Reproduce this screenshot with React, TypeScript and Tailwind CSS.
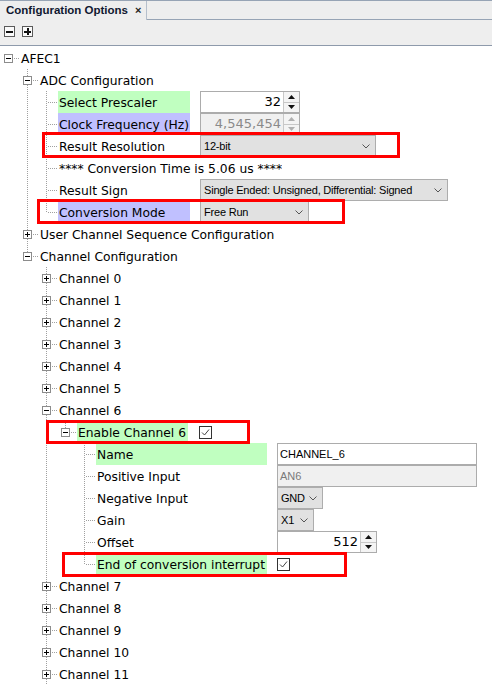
import clsx from "clsx";

type Ctrl =
  | { kind: "spin"; value: string; w: string; disabled?: boolean }
  | { kind: "combo"; value: string; w: string }
  | { kind: "text"; value: string; w: string; disabled?: boolean }
  | { kind: "check" };

interface TreeNode {
  label: string;
  open?: boolean; // undefined = leaf
  hl?: "green" | "blue";
  labelW?: string;
  gap?: string;
  ctrl?: Ctrl;
  children?: TreeNode[];
}

const adcLeaf = (label: string, ctrl?: Ctrl, hl?: "green" | "blue"): TreeNode => ({
  label,
  hl,
  ctrl,
  labelW: "w-[132px]",
  gap: "ml-[10px]",
});

const chLeaf = (label: string, ctrl?: Ctrl, hl?: "green" | "blue"): TreeNode => ({
  label,
  hl,
  ctrl,
  labelW: "w-[171px]",
  gap: "ml-[10px]",
});

const closedChannel = (n: number): TreeNode => ({ label: `Channel ${n}`, open: false });

const tree: TreeNode = {
  label: "AFEC1",
  open: true,
  children: [
    {
      label: "ADC Configuration",
      open: true,
      children: [
        adcLeaf("Select Prescaler", { kind: "spin", value: "32", w: "w-[100px]" }, "green"),
        adcLeaf("Clock Frequency (Hz)", { kind: "spin", value: "4,545,454", w: "w-[100px]", disabled: true }, "blue"),
        adcLeaf("Result Resolution", { kind: "combo", value: "12-bit", w: "w-[176px]" }),
        { label: "**** Conversion Time is 5.06 us ****" },
        adcLeaf("Result Sign", { kind: "combo", value: "Single Ended: Unsigned, Differential: Signed", w: "w-[248px]" }),
        adcLeaf("Conversion Mode", { kind: "combo", value: "Free Run", w: "w-[109px]" }, "blue"),
      ],
    },
    { label: "User Channel Sequence Configuration", open: false },
    {
      label: "Channel Configuration",
      open: true,
      children: [
        closedChannel(0),
        closedChannel(1),
        closedChannel(2),
        closedChannel(3),
        closedChannel(4),
        closedChannel(5),
        {
          label: "Channel 6",
          open: true,
          children: [
            {
              label: "Enable Channel 6",
              open: true,
              hl: "green",
              labelW: "w-[111px]",
              gap: "ml-[11px]",
              ctrl: { kind: "check" },
              children: [
                chLeaf("Name", { kind: "text", value: "CHANNEL_6", w: "w-[200px]" }, "green"),
                chLeaf("Positive Input", { kind: "text", value: "AN6", w: "w-[200px]", disabled: true }),
                chLeaf("Negative Input", { kind: "combo", value: "GND", w: "w-[46px]" }),
                chLeaf("Gain", { kind: "combo", value: "X1", w: "w-[37px]" }),
                chLeaf("Offset", { kind: "spin", value: "512", w: "w-[100px]" }),
                chLeaf("End of conversion interrupt", { kind: "check" }, "green"),
              ],
            },
          ],
        },
        closedChannel(7),
        closedChannel(8),
        closedChannel(9),
        closedChannel(10),
        closedChannel(11),
      ],
    },
  ],
};

interface Row {
  node: TreeNode;
  level: number;
  guides: boolean[];
  last: boolean;
  root: boolean;
}

function flatten(node: TreeNode, level: number, guides: boolean[], last: boolean, root: boolean, out: Row[]) {
  out.push({ node, level, guides, last, root });
  if (node.open && node.children) {
    node.children.forEach((c, i) => {
      // Channel 11 is not really the last one, the list goes on below the fold
      const isLast = i === node.children!.length - 1 && c.label !== "Channel 11";
      flatten(c, level + 1, [...guides, !last && !root], isLast, false, out);
    });
  }
}

const DOT = "#a0a0a0";

function Gutter({ row }: { row: Row }) {
  const { level, guides, last, root, node } = row;
  const w = 19 * (level + 1) + 1;
  const cx = 19 * level + 8.5;
  const hasBox = node.open !== undefined;
  return (
    <svg width={w} height={22} className="shrink-0" shapeRendering="crispEdges">
      {guides.map((g, i) =>
        g && i > 0 ? (
          <line key={i} x1={19 * i + 8.5} y1={0} x2={19 * i + 8.5} y2={22} stroke={DOT} strokeDasharray="1 1" />
        ) : null
      )}
      {!root && <line x1={cx} y1={0} x2={cx} y2={last ? 11 : 22} stroke={DOT} strokeDasharray="1 1" />}
      <line x1={cx + (hasBox ? 5 : 1)} y1={11.5} x2={19 * (level + 1)} y2={11.5} stroke={DOT} strokeDasharray="1 1" />
      {hasBox && (
        <g>
          <rect x={19 * level + 4.5} y={7.5} width={8} height={8} fill="#fff" stroke="#8c8c8c" />
          <line x1={19 * level + 6} y1={11.5} x2={19 * level + 11} y2={11.5} stroke="#000" />
          {!node.open && <line x1={cx} y1={9} x2={cx} y2={14} stroke="#000" />}
        </g>
      )}
    </svg>
  );
}

function Chevron() {
  return (
    <svg width={8} height={5} viewBox="0 0 8 5" className="shrink-0">
      <polyline points="0.5,0.5 4,4 7.5,0.5" fill="none" stroke="#555" strokeWidth={1} />
    </svg>
  );
}

function SpinButtons({ disabled }: { disabled?: boolean }) {
  const c = disabled ? "#b0b0b0" : "#111";
  return (
    <div className="flex flex-col w-[16px] h-full border-l border-[#c8c8c8]">
      <div className="flex-1 flex items-center justify-center bg-[#f4f4f4] border-b border-[#c8c8c8]">
        <svg width={7} height={4} viewBox="0 0 7 4">
          <polygon points="0,4 7,4 3.5,0" fill={c} />
        </svg>
      </div>
      <div className="flex-1 flex items-center justify-center bg-[#f4f4f4]">
        <svg width={7} height={4} viewBox="0 0 7 4">
          <polygon points="0,0 7,0 3.5,4" fill={c} />
        </svg>
      </div>
    </div>
  );
}

function CheckBox() {
  return (
    <div className="w-[13px] h-[13px] border border-[#333] bg-white flex items-center justify-center">
      <svg width={11} height={11} viewBox="0 0 11 11">
        <polyline points="2,5.5 4.5,8 9,2.5" fill="none" stroke="#444" strokeWidth={1} />
      </svg>
    </div>
  );
}

function Control({ ctrl }: { ctrl: Ctrl }) {
  const font = "font-['Liberation_Sans',Arial,sans-serif] text-[11px]";
  if (ctrl.kind === "check") {
    return (
      <div className="h-[22px] flex items-center">
        <CheckBox />
      </div>
    );
  }
  if (ctrl.kind === "spin") {
    return (
      <div
        className={clsx(
          "h-[22px] flex border border-[#acacac] box-border",
          ctrl.w,
          ctrl.disabled ? "bg-[#f0f0f0]" : "bg-white"
        )}
      >
        <div
          className={clsx(
            "flex-1 flex items-center justify-end pr-[2px] text-[13px] font-['DejaVu_Sans',sans-serif]",
            ctrl.disabled ? "text-[#8a8a8a]" : "text-black"
          )}
        >
          {ctrl.value}
        </div>
        <SpinButtons disabled={ctrl.disabled} />
      </div>
    );
  }
  if (ctrl.kind === "combo") {
    return (
      <div
        className={clsx(
          "h-[22px] flex items-center justify-between gap-[3px] pl-[3px] pr-[5px] border border-[#adadad] bg-[#e1e1e1] box-border text-black",
          ctrl.w,
          font
        )}
      >
        <span className="whitespace-nowrap tracking-[-0.2px]">{ctrl.value}</span>
        <Chevron />
      </div>
    );
  }
  return (
    <div
      className={clsx(
        "h-[22px] flex items-center pl-[2px] border border-[#acacac] box-border",
        ctrl.w,
        font,
        ctrl.disabled ? "bg-[#f0f0f0] text-[#7a7a7a]" : "bg-white text-black"
      )}
    >
      {ctrl.value}
    </div>
  );
}

function TreeRow({ row }: { row: Row }) {
  const { node } = row;
  return (
    <div className="flex h-[22px] items-start">
      <Gutter row={row} />
      <span
        className={clsx(
          "h-[22px] leading-[24px] pl-px whitespace-nowrap shrink-0 overflow-hidden",
          node.labelW,
          node.hl === "green" && "bg-[#c0ffc0]",
          node.hl === "blue" && "bg-[#c0c0ff]"
        )}
      >
        {node.label}
      </span>
      {node.ctrl && (
        <div className={clsx("shrink-0", node.gap)}>
          <Control ctrl={node.ctrl} />
        </div>
      )}
    </div>
  );
}

function ToolButton({ plus }: { plus?: boolean }) {
  return (
    <div className="w-[11px] h-[11px] border border-[#5a5a5a] bg-[#fafafa] flex items-center justify-center">
      <svg width={7} height={7} viewBox="0 0 7 7" shapeRendering="crispEdges">
        <rect x={0} y={2.5} width={7} height={2} fill="#111" />
        {plus && <rect x={2.5} y={0} width={2} height={7} fill="#111" />}
      </svg>
    </div>
  );
}

export default function App() {
  const rows: Row[] = [];
  flatten(tree, 0, [], true, true, rows);

  return (
    <div className="relative w-[492px] h-[688px] overflow-hidden bg-white font-['DejaVu_Sans',Verdana,sans-serif] text-[12.3px] text-black">
      {/* tab strip */}
      <div className="flex h-[20px] border-t border-[#97a4b5] bg-[#eeeeee]">
        <div className="w-[147px] flex items-center pl-[6px] gap-[7px] border-r border-[#b5bfcc]">
          <span className="font-['Liberation_Sans',Arial,sans-serif] font-bold text-[11.5px] text-[#101830]">
            Configuration Options
          </span>
          <span className="font-['Liberation_Sans',Arial,sans-serif] font-bold text-[11px] text-[#222] leading-none">
            ×
          </span>
        </div>
        <div className="flex-1 border-b border-[#97a4b5]" />
      </div>
      {/* toolbar */}
      <div className="h-[26px] flex items-center gap-[7px] pl-[4px] pb-[2px] bg-[#eeeeee] border-b border-[#8e9aab]">
        <ToolButton />
        <ToolButton plus />
      </div>
      {/* tree */}
      <div className="pt-px">
        {rows.map((r, i) => (
          <TreeRow key={i} row={r} />
        ))}
      </div>

      {/* red annotation boxes */}
      <div className="absolute left-[42px] top-[132px] w-[358px] h-[26px] border-[3px] border-[#ff0000]" />
      <div className="absolute left-[37px] top-[199px] w-[308px] h-[25px] border-[3px] border-[#ff0000]" />
      <div className="absolute left-[46px] top-[420px] w-[204px] h-[24px] border-[3px] border-[#ff0000]" />
      <div className="absolute left-[62px] top-[552px] w-[285px] h-[25px] border-[3px] border-[#ff0000]" />
    </div>
  );
}
